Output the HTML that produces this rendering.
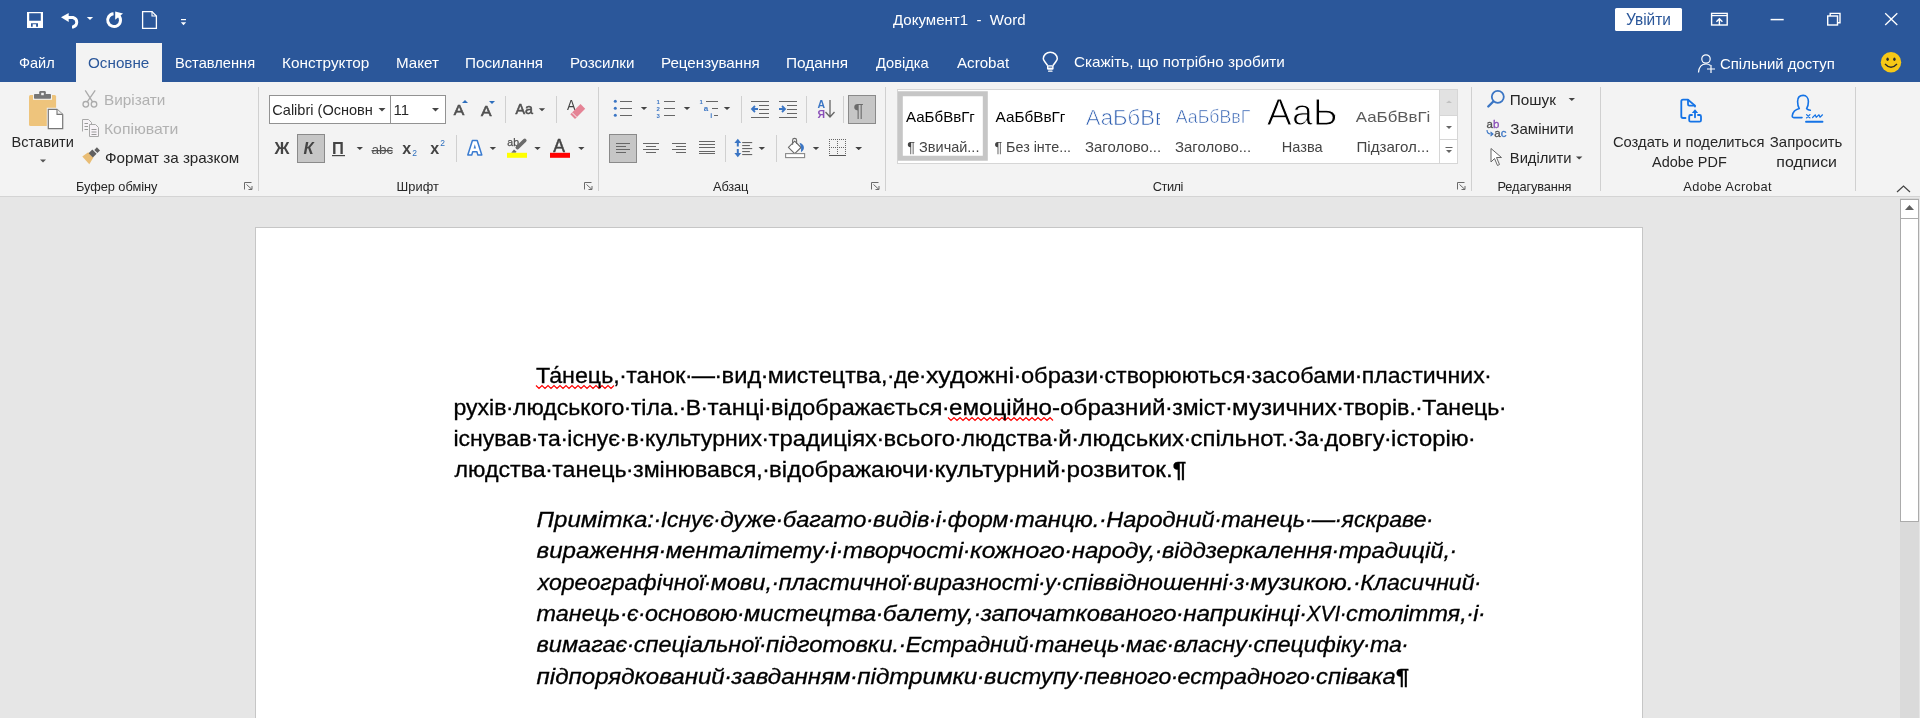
<!DOCTYPE html>
<html><head><meta charset="utf-8"><title>Word</title>
<style>
html,body{margin:0;padding:0;width:1920px;height:718px;overflow:hidden;background:#e6e6e6;}
svg{display:block;will-change:transform;font-family:"Liberation Sans",sans-serif;}
text{white-space:pre;}
</style></head><body>
<svg width="1920" height="718" viewBox="0 0 1920 718">
<!-- backgrounds -->
<rect x="0" y="0" width="1920" height="82" fill="#2b579a"/>
<rect x="76" y="43" width="86" height="40" fill="#f3f3f3"/>
<rect x="0" y="82" width="1920" height="114" fill="#f3f3f3"/>
<rect x="0" y="196" width="1920" height="1" fill="#d4d4d4"/>
<rect x="0" y="197" width="1920" height="521" fill="#e6e6e6"/>
<rect x="255.5" y="227.5" width="1387" height="500" fill="#ffffff" stroke="#c6c6c6" stroke-width="1"/>
<!-- scrollbar -->
<rect x="1900" y="198" width="19" height="520" fill="#dadada"/>
<rect x="1900.5" y="199.5" width="18" height="19" fill="#ffffff" stroke="#ababab"/>
<polygon points="1905,210 1914,210 1909.5,205" fill="#606060"/>
<rect x="1900.5" y="218.5" width="18" height="303" fill="#ffffff" stroke="#ababab"/>

<!-- QAT -->
<g fill="#ffffff">
  <path d="M27,12 H43 V28 H27 Z M29.2,13.2 V20.8 H40.8 V13.2 Z M31,23.2 V26.8 H32.7 V24.3 H36.1 V26.8 H38 V23.2 Z" fill-rule="evenodd"/>
  <polygon points="61,17.3 68.7,12.9 68.7,22.1"/>
  <path d="M67,17.5 H73 A5.5,5 0 0 1 73,27 H72" fill="none" stroke="#ffffff" stroke-width="2.9"/>
  <polygon points="86.8,17 93.1,17 90,20"/>
  <path d="M113.54,13.72 A6.4,6.4 0 1 0 118.38,15.34" fill="none" stroke="#ffffff" stroke-width="3"/>
  <polygon points="115.2,11.6 123,13.4 115.2,19.8"/>
  <path d="M142.6,11.6 H152 L156.4,16 V28.4 H142.6 Z" fill="none" stroke="#ffffff" stroke-width="1.3"/>
  <path d="M152,11.6 V16 H156.4" fill="none" stroke="#ffffff" stroke-width="1.1"/>
  <rect x="181" y="19" width="5" height="1.2"/>
  <polygon points="180.8,22.2 186.2,22.2 183.5,25.2"/>
</g>
<!-- title bar right -->
<rect x="1615" y="8" width="67" height="23" rx="1.5" fill="#ffffff"/>
<g fill="none" stroke="#ffffff" stroke-width="1.4">
  <rect x="1711.6" y="13.4" width="15.6" height="11.6"/>
  <path d="M1711.6,15.6 H1727.2" stroke-width="1.2"/>
  <path d="M1719.4,25 V18.8 M1716.4,21.8 L1719.4,18.8 L1722.4,21.8"/>
  <path d="M1770.6,19.6 H1783.7" stroke-width="1.5"/>
  <rect x="1827.7" y="16" width="9.8" height="9"/>
  <path d="M1830.2,16 V13.4 H1840 V22.7 H1837.5"/>
  <path d="M1885.2,13.2 L1897.3,25 M1897.3,13.2 L1885.2,25" stroke-width="1.3"/>
</g>
<!-- tabs row icons -->
<g fill="none" stroke="#ffffff" stroke-width="1.2">
  <path d="M1047.6,65.5 L1045,62 C1044,60.6 1043.3,59.6 1043.3,58.8 A7,6.6 0 0 1 1057.3,58.8 C1057.3,59.6 1056.6,60.6 1055.6,62 L1053,65.5" stroke-width="1.5"/>
  <circle cx="1706" cy="59" r="4.2"/>
  <path d="M1698.5,72.5 C1699,66 1702,64 1706,64 C1708,64 1709.5,64.5 1710.5,65.5"/>
  <path d="M1711,65 V73 M1707,69 H1715"/>
</g>
<path d="M1047,65.2 H1053.6 V68.6 Q1053.6,69.8 1052.4,69.8 H1048.2 Q1047,69.8 1047,68.6 Z" fill="#ffffff"/>
<rect x="1048.4" y="66.6" width="3.8" height="1" fill="#2b579a"/>
<rect x="1048" y="70.6" width="4.6" height="1.2" rx="0.6" fill="#ffffff"/>
<circle cx="1891" cy="62.3" r="10.2" fill="#f6c816"/>
<g fill="#2b2b2b">
  <ellipse cx="1887.6" cy="59.3" rx="1.2" ry="1.8"/>
  <ellipse cx="1894.4" cy="59.3" rx="1.2" ry="1.8"/>
</g>
<path d="M1885,64 Q1891,70.5 1897,64" fill="none" stroke="#2b2b2b" stroke-width="1.3"/>
<!-- ===== RIBBON ===== -->
<!-- group separators -->
<g fill="#d0d0d0">
  <rect x="258" y="87" width="1" height="104"/>
  <rect x="598" y="87" width="1" height="104"/>
  <rect x="885" y="87" width="1" height="104"/>
  <rect x="1471" y="87" width="1" height="104"/>
  <rect x="1600" y="87" width="1" height="104"/>
  <rect x="1855" y="87" width="1" height="104"/>
</g>
<!-- launchers -->
<g fill="none" stroke="#6a6a6a" stroke-width="1">
  <path d="M244.5,189.5 V182.5 H251.5"/><path d="M246.5,184.5 L252,189.5 M252,186 V189.5 H248.5"/>
  <path d="M584.5,189.5 V182.5 H591.5"/><path d="M586.5,184.5 L592,189.5 M592,186 V189.5 H588.5"/>
  <path d="M871.5,189.5 V182.5 H878.5"/><path d="M873.5,184.5 L879,189.5 M879,186 V189.5 H875.5"/>
  <path d="M1457.5,189.5 V182.5 H1464.5"/><path d="M1459.5,184.5 L1465,189.5 M1465,186 V189.5 H1461.5"/>
</g>
<!-- collapse caret -->
<path d="M1897,192 L1903.5,186 L1910,192" fill="none" stroke="#444" stroke-width="1.2"/>

<!-- Paste -->
<rect x="29" y="95" width="27.1" height="31" rx="1.5" fill="#eec47c"/>
<rect x="33" y="93" width="19" height="6.8" fill="#f3f3f3"/>
<rect x="34" y="94" width="17" height="4.8" rx="0.8" fill="#767676"/>
<rect x="39.2" y="91.1" width="6.6" height="5.2" rx="1.2" fill="#767676"/>
<rect x="41.2" y="92.8" width="2.6" height="2.4" fill="#f3f3f3"/>
<path d="M48.3,109.3 H57 L62.7,114.4 V128.6 H48.3 Z" fill="#ffffff" stroke="#f3f3f3" stroke-width="3"/>
<path d="M48.3,109.3 H57 L62.7,114.4 V128.6 H48.3 Z" fill="#ffffff" stroke="#777" stroke-width="1.2"/>
<path d="M57,109.3 V114.4 H62.7" fill="#f0f0f0" stroke="#777" stroke-width="1.1"/>
<polygon points="40,159.5 46,159.5 43,162.5" fill="#555"/>
<!-- scissors -->
<g fill="none" stroke="#ababab" stroke-width="1.3">
  <circle cx="85.8" cy="104.3" r="2.8"/><circle cx="94" cy="104.3" r="2.8"/>
  <path d="M87.2,101.8 L95.2,90.3 M92.6,101.8 L85.2,90.3"/>
</g>
<!-- copy -->
<g stroke="#a8a8a8" stroke-width="1">
  <path d="M82.5,131.5 V119.5 H88.5 L91.5,122.5 V124.5" fill="#f7f3f7"/>
  <path d="M89.5,124.5 H95.5 L98.5,127.5 V136.5 H89.5 Z" fill="#f7f3f7"/>
  <path d="M84.5,123.5 H88 M84.5,126.5 H88 M84.5,129.5 H88" stroke="#9a9a9a"/>
  <path d="M91.5,129.5 H96.5 M91.5,132 H96.5 M91.5,134.5 H96.5" stroke="#9a9a9a"/>
</g>
<!-- format painter -->
<path d="M82.3,156.5 L88.2,152.2 L93.4,157.4 L89.3,164.3 Z" fill="#e9bd75"/>
<path d="M88.6,153.2 L92.3,149.5 L96.6,153.8 L92.9,157.5 Z" fill="#606060"/>
<path d="M94.3,149.9 L96.9,147.3 L100,150.4 L97.4,153 Z" fill="#606060"/>
<!-- Font box -->
<rect x="269.5" y="95.5" width="176" height="28" fill="#ffffff" stroke="#929292"/>
<rect x="390" y="96" width="1" height="27" fill="#929292"/>
<g fill="#444">
  <polygon points="378.5,108 385.5,108 382,111.5"/>
  <polygon points="432,108 439,108 435.5,111.5"/>
</g>
<g font-family="Liberation Sans" fill="#505050" stroke="#505050" stroke-width="0.6">
  <text x="453.8" y="115" font-size="14.5" textLength="10.5" lengthAdjust="spacingAndGlyphs">A</text>
  <text x="480.9" y="116" font-size="14.5" textLength="10.5" lengthAdjust="spacingAndGlyphs">A</text>
  <text x="515.5" y="114" font-size="15" textLength="17.5" lengthAdjust="spacingAndGlyphs">Aa</text>
</g>
<g fill="#2e6fbd">
  <polygon points="462,103 468,103 465,100"/>
  <polygon points="489,101 495,101 492,104"/>
</g>
<rect x="505" y="96" width="1" height="27" fill="#d0d0d0"/>
<rect x="556" y="96" width="1" height="27" fill="#d0d0d0"/>
<polygon points="538.8,108.2 545.1,108.2 542,111.2" fill="#444"/>
<text x="567" y="110.4" font-size="14" fill="#444" font-family="Liberation Sans" textLength="8.5" lengthAdjust="spacingAndGlyphs">A</text>
<path d="M570.3,114.2 L580.5,104 L585.2,108.7 L575,118.9 Z" fill="#e58395"/>
<path d="M572,112.5 L576.7,117.2" stroke="#f3f3f3" stroke-width="1"/>
<!-- row 2 -->
<rect x="297.5" y="134.5" width="27" height="28" fill="#c6c6c6" stroke="#8a8a8a"/>
<g font-family="Liberation Sans" fill="#444" font-weight="bold">
  <text x="274.5" y="154" font-size="16.5">Ж</text>
  <text x="303.5" y="154" font-size="16.5" font-style="italic">К</text>
  <text x="332" y="154" font-size="16.5">П</text>
  <text x="402.3" y="153.7" font-size="16">x</text>
  <text x="430.3" y="153.7" font-size="16">x</text>
</g>
<rect x="332" y="155" width="13" height="1.2" fill="#444"/>
<text x="371.5" y="153.7" font-size="13.5" fill="#505050" font-family="Liberation Sans">abc</text>
<rect x="371.5" y="150" width="21" height="1.3" fill="#505050"/>
<g font-family="Liberation Sans" fill="#2e6fbd" font-size="8.5">
  <text x="412.3" y="155.7">2</text>
  <text x="440.3" y="145.7">2</text>
</g>
<polygon points="356.6,147.1 363,147.1 359.8,150.1" fill="#444"/>
<rect x="456" y="135" width="1" height="27" fill="#d0d0d0"/>
<!-- text effects A -->
<path d="M472.4,140.6 H477.2 L481.8,155.1 H477.9 L476.9,151.7 H472.7 L471.7,155.1 H467.8 Z" fill="#ffffff" stroke="#3a7bd0" stroke-width="1.5" stroke-linejoin="round"/>
<polygon points="473.6,148.6 476,148.6 474.8,144.2" fill="#3a7bd0"/>
<polygon points="489.7,147.1 496.1,147.1 492.9,150.1" fill="#444"/>
<!-- highlighter -->
<text x="507.3" y="145.6" font-size="10.5" font-family="Liberation Sans" fill="#505050" stroke="#505050" stroke-width="0.25">ab</text>
<path d="M517.3,147.6 L524.8,140.4" stroke="#6b6b6b" stroke-width="3.6" stroke-linecap="round"/>
<polygon points="511.2,152.8 514,149.4 516.6,151.8 515.6,152.8" fill="#6b6b6b"/>
<rect x="507" y="152.8" width="20" height="5" fill="#ffff00"/>
<polygon points="534.3,147.1 540.7,147.1 537.5,150.1" fill="#444"/>
<!-- font color -->
<text x="553.3" y="151.6" font-size="17.5" font-family="Liberation Sans" fill="#444" stroke="#444" stroke-width="0.5">A</text>
<rect x="550" y="152.8" width="20" height="5" fill="#ff0000"/>
<polygon points="578.1,147.1 584.5,147.1 581.3,150.1" fill="#444"/>

<!-- Paragraph row1 -->
<g fill="#3a75c4">
  <circle cx="615.3" cy="101.3" r="1.5"/><circle cx="615.3" cy="108.3" r="1.5"/><circle cx="615.3" cy="115.3" r="1.5"/>
</g>
<g fill="#666">
  <rect x="620" y="101" width="12" height="1"/><rect x="620" y="108" width="12" height="1"/><rect x="620" y="115" width="12" height="1"/>
  <rect x="664" y="101" width="11" height="1"/><rect x="664" y="108" width="11" height="1"/><rect x="664" y="115" width="11" height="1"/>
  <rect x="706" y="101" width="12" height="1"/><rect x="712" y="108" width="6" height="1"/><rect x="714" y="115" width="4" height="1"/>
</g>
<g font-family="Liberation Sans" fill="#3a75c4" font-weight="bold">
  <text x="656.5" y="103.5" font-size="6">1</text><text x="656.5" y="110.5" font-size="6">2</text><text x="656.5" y="117.5" font-size="6">3</text>
  <text x="699.5" y="104" font-size="6">1</text><text x="703.8" y="110.8" font-size="8">a</text><text x="710.3" y="117.5" font-size="7">i</text>
</g>
<g fill="#444">
  <polygon points="640.8,107 647.2,107 644,110"/>
  <polygon points="683.8,107 690.2,107 687,110"/>
  <polygon points="723.8,107 730.2,107 727,110"/>
</g>
<rect x="741" y="96" width="1" height="27" fill="#d0d0d0"/>
<rect x="806" y="96" width="1" height="27" fill="#d0d0d0"/>
<rect x="843" y="96" width="1" height="27" fill="#d0d0d0"/>
<g fill="#666">
  <rect x="751" y="101" width="18" height="1"/><rect x="759" y="105" width="10" height="1"/><rect x="759" y="109" width="10" height="1"/><rect x="759" y="113" width="10" height="1"/><rect x="751" y="117" width="18" height="1"/>
  <rect x="779" y="101" width="18" height="1"/><rect x="787" y="105" width="10" height="1"/><rect x="787" y="109" width="10" height="1"/><rect x="787" y="113" width="10" height="1"/><rect x="779" y="117" width="18" height="1"/>
</g>
<g fill="none" stroke="#3a75c4" stroke-width="1.8">
  <path d="M758,109 H752 M755,106 L752,109 L755,112"/>
  <path d="M779,109 H785 M782,106 L785,109 L782,112"/>
</g>
<text x="817.5" y="107.5" font-size="10.5" font-family="Liberation Sans" fill="#3a75c4" font-weight="bold">A</text>
<text x="817.5" y="117.5" font-size="10.5" font-family="Liberation Sans" fill="#8a4fb8" font-weight="bold">Я</text>
<path d="M830,100 V117 M825.5,112 L830,117 L834.5,112" fill="none" stroke="#666" stroke-width="1.3"/>
<rect x="848.5" y="95.5" width="27" height="28" fill="#c6c6c6" stroke="#8a8a8a"/>
<text x="853.5" y="117" font-size="19" font-family="Liberation Sans" fill="#6a6a6a">¶</text>
<!-- Paragraph row2 -->
<rect x="609.5" y="134.5" width="27" height="28" fill="#c6c6c6" stroke="#8a8a8a"/>
<g fill="#666">
  <rect x="616" y="143" width="14" height="1"/><rect x="616" y="146" width="10" height="1"/><rect x="616" y="149" width="14" height="1"/><rect x="616" y="152" width="10" height="1"/>
  <rect x="643" y="143" width="16" height="1"/><rect x="646" y="146" width="10" height="1"/><rect x="643" y="149" width="16" height="1"/><rect x="646" y="152" width="10" height="1"/>
  <rect x="672" y="143" width="14" height="1"/><rect x="676" y="146" width="10" height="1"/><rect x="672" y="149" width="14" height="1"/><rect x="676" y="152" width="10" height="1"/>
  <rect x="699" y="141" width="16" height="1"/><rect x="699" y="144" width="16" height="1"/><rect x="699" y="147" width="16" height="1"/><rect x="699" y="151" width="16" height="1"/><rect x="699" y="153" width="16" height="1"/>
  <rect x="742.2" y="142" width="10" height="1.1"/><rect x="742.2" y="145" width="7.7" height="1.1"/><rect x="742.2" y="148" width="10" height="1.1"/><rect x="742.2" y="151" width="7.7" height="1.1"/><rect x="742.2" y="154" width="10" height="1.1"/>
</g>
<rect x="725" y="135" width="1" height="27" fill="#d0d0d0"/>
<rect x="776" y="135" width="1" height="27" fill="#d0d0d0"/>
<path d="M737.8,142 V146.6 M737.8,149.1 V154" fill="none" stroke="#3a75c4" stroke-width="2"/>
<polygon points="737.8,138.8 734.4,143 741.2,143" fill="#3a75c4"/>
<polygon points="737.8,157.3 734.4,153 741.2,153" fill="#3a75c4"/>
<g fill="#444">
  <polygon points="758.6,147.1 765,147.1 761.8,150.1"/>
  <polygon points="812.8,147.1 819.2,147.1 816,150.1"/>
  <polygon points="855.5,147.1 861.9,147.1 858.7,150.1"/>
</g>
<!-- shading -->
<path d="M788.4,147.3 L794.7,141.2 L801,147.5 L794.7,153.6 Z" fill="#ffffff" stroke="#6a6a6a" stroke-width="1.1" stroke-linejoin="round"/>
<path d="M792.6,144.8 V140.2 Q792.6,138.4 794.6,138.4 Q796.6,138.4 796.6,140.2 V144" fill="none" stroke="#6a6a6a" stroke-width="1.1"/>
<path d="M799.6,142.8 Q804.8,144.5 803.8,149 Q803,151 801,152.2 Q801.8,148 799.6,142.8 Z" fill="#3a75c4"/>
<rect x="785.6" y="153.6" width="19" height="4" fill="#ffffff" stroke="#888" stroke-width="1.1"/>
<!-- borders -->
<g fill="#666"><rect x="829" y="139" width="1" height="1"/><rect x="829" y="141" width="1" height="1"/><rect x="829" y="143" width="1" height="1"/><rect x="829" y="145" width="1" height="1"/><rect x="829" y="147" width="1" height="1"/><rect x="829" y="149" width="1" height="1"/><rect x="829" y="151" width="1" height="1"/><rect x="829" y="153" width="1" height="1"/><rect x="829" y="155" width="1" height="1"/><rect x="831" y="139" width="1" height="1"/><rect x="831" y="147" width="1" height="1"/><rect x="833" y="139" width="1" height="1"/><rect x="833" y="147" width="1" height="1"/><rect x="835" y="139" width="1" height="1"/><rect x="835" y="147" width="1" height="1"/><rect x="837" y="139" width="1" height="1"/><rect x="837" y="141" width="1" height="1"/><rect x="837" y="143" width="1" height="1"/><rect x="837" y="145" width="1" height="1"/><rect x="837" y="147" width="1" height="1"/><rect x="837" y="149" width="1" height="1"/><rect x="837" y="151" width="1" height="1"/><rect x="837" y="153" width="1" height="1"/><rect x="837" y="155" width="1" height="1"/><rect x="839" y="139" width="1" height="1"/><rect x="839" y="147" width="1" height="1"/><rect x="841" y="139" width="1" height="1"/><rect x="841" y="147" width="1" height="1"/><rect x="843" y="139" width="1" height="1"/><rect x="843" y="147" width="1" height="1"/><rect x="845" y="139" width="1" height="1"/><rect x="845" y="141" width="1" height="1"/><rect x="845" y="143" width="1" height="1"/><rect x="845" y="145" width="1" height="1"/><rect x="845" y="147" width="1" height="1"/><rect x="845" y="149" width="1" height="1"/><rect x="845" y="151" width="1" height="1"/><rect x="845" y="153" width="1" height="1"/><rect x="845" y="155" width="1" height="1"/></g>
<rect x="829" y="155" width="17" height="1" fill="#555"/>
<polygon points="855.5,147.1 861.9,147.1 858.7,150.1" fill="#444"/>

<!-- Styles gallery -->
<rect x="897.5" y="89.5" width="560" height="74" fill="#ffffff" stroke="#d6d6d6"/>
<rect x="900.3" y="93.75" width="85" height="64.5" fill="none" stroke="#c6c6c6" stroke-width="5"/>
<rect x="1440" y="90" width="17" height="25" fill="#e2e2e2"/>
<rect x="1439.5" y="89.5" width="18" height="74" fill="none" stroke="#d6d6d6"/>
<path d="M1439.5,115.5 H1457.5 M1439.5,139.5 H1457.5" stroke="#d6d6d6" stroke-width="1"/>
<polygon points="1446,103 1452,103 1449,100.5" fill="#c2c2c2"/>
<polygon points="1446,126 1452,126 1449,129" fill="#666"/>
<rect x="1445.5" y="147" width="7" height="1" fill="#666"/>
<polygon points="1446,150 1452,150 1449,153" fill="#666"/>

<!-- Editing -->
<circle cx="1497.8" cy="96.8" r="6" fill="none" stroke="#3a75c4" stroke-width="1.8"/>
<path d="M1493.3,101.5 L1488.3,106.5" stroke="#3a75c4" stroke-width="2.4" stroke-linecap="round"/>
<polygon points="1568.6,98 1575,98 1571.8,101" fill="#444"/>
<text x="1486.5" y="127.8" font-size="11.5" font-family="Liberation Sans" fill="#505050" stroke="#505050" stroke-width="0.3">a<tspan fill="#8a4fb8" stroke="#8a4fb8">b</tspan></text>
<text x="1494.3" y="137" font-size="11.5" font-family="Liberation Sans" fill="#505050" stroke="#505050" stroke-width="0.3">a<tspan fill="#3a75c4" stroke="#3a75c4">c</tspan></text>
<path d="M1487,130 Q1487,134 1491,134 H1493 M1490.5,131.8 L1493,134 L1490.5,136.2" fill="none" stroke="#3a75c4" stroke-width="1.1"/>
<path d="M1491,148.5 V162 L1494.5,158.5 L1497.5,165.5 L1499.5,164.5 L1496.5,157.5 H1501.5 Z" fill="#ffffff" stroke="#666" stroke-width="1"/>
<polygon points="1576,156.5 1582.4,156.5 1579.2,159.5" fill="#444"/>

<!-- Acrobat icons -->
<g fill="none" stroke="#1473e6" stroke-width="1.8" stroke-linejoin="round" stroke-linecap="round">
  <path d="M1685.5,118 H1683 Q1681.3,118 1681.3,116.3 V101.4 Q1681.3,99.7 1683,99.7 H1688 L1695,105.6 V106.5"/>
  <path d="M1688,99.9 V104.3 Q1688,105.6 1689.3,105.6 H1694.5"/>
  <path d="M1692,115 H1690.6 Q1689.2,115 1689.2,116.4 V120.3 Q1689.2,121.7 1690.6,121.7 H1699.6 Q1701,121.7 1701,120.3 V116.4 Q1701,115 1699.6,115 H1698"/>
  <path d="M1695,117.3 V111.5"/>
  <path d="M1802,117.6 H1793.8 Q1792,117.6 1792.3,115.6 C1793,111 1796,109.5 1799.3,108.6 C1798.2,107 1797.6,104.5 1797.6,101.5 C1797.6,97.5 1800,95.4 1803.2,95.4 C1806.4,95.4 1808.4,98 1808.4,101.5 C1808.4,104.5 1807.6,107 1806.6,108.6 C1807.6,109.5 1808.6,110 1810.3,110.3" stroke-width="1.6"/>
  <path d="M1806.6,114.6 L1809.9,117.9 M1809.9,114.6 L1806.6,117.9" stroke-width="1.3"/>
  <path d="M1812.6,117.5 L1815.2,114.8 L1816.2,117.4 L1819,114.8 L1820,117.2 L1822.5,114.8" stroke-width="1.2"/>
  <path d="M1806,121.8 H1822.5" stroke-width="1.9"/>
</g>
<polygon points="1695,109.3 1691.8,113 1698.2,113" fill="#1473e6"/>
<!-- spell squiggles -->
<path d="M536,385.5 l3,3 l3,-3 l3,3 l3,-3 l3,3 l3,-3 l3,3 l3,-3 l3,3 l3,-3 l3,3 l3,-3 l3,3 l3,-3 l3,3 l3,-3 l3,3 l3,-3 l3,3 l3,-3 l3,3 l3,-3 l3,3 l3,-3 l3,3 l3,-3" fill="none" stroke="#ff0000" stroke-width="1.2"/>
<path d="M948,417.5 l3,3 l3,-3 l3,3 l3,-3 l3,3 l3,-3 l3,3 l3,-3 l3,3 l3,-3 l3,3 l3,-3 l3,3 l3,-3 l3,3 l3,-3 l3,3 l3,-3 l3,3 l3,-3 l3,3 l3,-3 l3,3 l3,-3 l3,3 l3,-3 l3,3 l3,-3 l3,3 l3,-3 l3,3 l3,-3 l3,3 l3,-3 l3,3" fill="none" stroke="#ff0000" stroke-width="1.2"/>

<text x="893.00" y="25" font-size="15" fill="#ffffff" textLength="132.54" lengthAdjust="spacingAndGlyphs">Документ1  -  Word</text>
<text x="1626.00" y="25" font-size="16" fill="#2b579a" textLength="44.90" lengthAdjust="spacingAndGlyphs">Увійти</text>
<text x="19.00" y="68" font-size="15" fill="#ffffff" textLength="35.73" lengthAdjust="spacingAndGlyphs">Файл</text>
<text x="88.00" y="68" font-size="15" fill="#2b579a" textLength="61.35" lengthAdjust="spacingAndGlyphs">Основне</text>
<text x="175.02" y="68" font-size="15" fill="#ffffff" textLength="80.10" lengthAdjust="spacingAndGlyphs">Вставлення</text>
<text x="281.98" y="68" font-size="15" fill="#ffffff" textLength="87.37" lengthAdjust="spacingAndGlyphs">Конструктор</text>
<text x="395.99" y="68" font-size="15" fill="#ffffff" textLength="42.88" lengthAdjust="spacingAndGlyphs">Макет</text>
<text x="464.98" y="68" font-size="15" fill="#ffffff" textLength="78.14" lengthAdjust="spacingAndGlyphs">Посилання</text>
<text x="569.99" y="68" font-size="15" fill="#ffffff" textLength="64.39" lengthAdjust="spacingAndGlyphs">Розсилки</text>
<text x="660.99" y="68" font-size="15" fill="#ffffff" textLength="98.73" lengthAdjust="spacingAndGlyphs">Рецензування</text>
<text x="785.97" y="68" font-size="15" fill="#ffffff" textLength="62.15" lengthAdjust="spacingAndGlyphs">Подання</text>
<text x="876.00" y="68" font-size="15" fill="#ffffff" textLength="52.76" lengthAdjust="spacingAndGlyphs">Довідка</text>
<text x="957.00" y="68" font-size="15" fill="#ffffff" textLength="52.16" lengthAdjust="spacingAndGlyphs">Acrobat</text>
<text x="1074.00" y="67" font-size="15" fill="#ffffff" textLength="210.89" lengthAdjust="spacingAndGlyphs">Скажіть, що потрібно зробити</text>
<text x="1720.00" y="69" font-size="15" fill="#ffffff" textLength="114.82" lengthAdjust="spacingAndGlyphs">Спільний доступ</text>
<text x="11.53" y="147" font-size="15" fill="#262626" textLength="62.34" lengthAdjust="spacingAndGlyphs">Вставити</text>
<text x="103.98" y="105" font-size="15" fill="#b1b1b1" textLength="61.41" lengthAdjust="spacingAndGlyphs">Вирізати</text>
<text x="103.95" y="134" font-size="15" fill="#b1b1b1" textLength="74.45" lengthAdjust="spacingAndGlyphs">Копіювати</text>
<text x="105.00" y="163" font-size="15" fill="#262626" textLength="134.32" lengthAdjust="spacingAndGlyphs">Формат за зразком</text>
<text x="76.00" y="190.5" font-size="12.8" fill="#262626" textLength="81.40" lengthAdjust="spacing">Буфер обміну</text>
<text x="396.50" y="190.5" font-size="12.8" fill="#262626" textLength="42.36" lengthAdjust="spacing">Шрифт</text>
<text x="713.00" y="190.5" font-size="12.8" fill="#262626" textLength="35.33" lengthAdjust="spacing">Абзац</text>
<text x="1152.80" y="190.5" font-size="12.8" fill="#262626" textLength="30.54" lengthAdjust="spacing">Стилі</text>
<text x="1497.50" y="190.5" font-size="12.8" fill="#262626" textLength="74.03" lengthAdjust="spacing">Редагування</text>
<text x="1683.30" y="190.5" font-size="12.8" fill="#262626" textLength="88.26" lengthAdjust="spacing">Adobe Acrobat</text>
<text x="272.30" y="114.5" font-size="15" fill="#262626" textLength="100.58" lengthAdjust="spacingAndGlyphs">Calibri (Основн</text>
<text x="393.50" y="114.5" font-size="15" fill="#262626" textLength="15.54" lengthAdjust="spacingAndGlyphs">11</text>
<text x="1509.78" y="105" font-size="15" fill="#262626" textLength="46.17" lengthAdjust="spacingAndGlyphs">Пошук</text>
<text x="1510.30" y="133.8" font-size="15" fill="#262626" textLength="63.28" lengthAdjust="spacingAndGlyphs">Замінити</text>
<text x="1509.82" y="162.6" font-size="15" fill="#262626" textLength="61.75" lengthAdjust="spacingAndGlyphs">Виділити</text>
<text x="1612.90" y="146.8" font-size="15" fill="#262626" textLength="151.52" lengthAdjust="spacingAndGlyphs">Создать и поделиться</text>
<text x="1652.00" y="166.7" font-size="15" fill="#262626" textLength="74.76" lengthAdjust="spacingAndGlyphs">Adobe PDF</text>
<text x="1769.80" y="146.8" font-size="15" fill="#262626" textLength="72.62" lengthAdjust="spacingAndGlyphs">Запросить</text>
<text x="1776.34" y="166.7" font-size="15" fill="#262626" textLength="60.66" lengthAdjust="spacingAndGlyphs">подписи</text>
<text x="906.00" y="122" font-size="15" fill="#000000" textLength="68.87" lengthAdjust="spacingAndGlyphs">АаБбВвГг</text>
<text x="907.30" y="152" font-size="15" fill="#444444" textLength="72.13" lengthAdjust="spacingAndGlyphs">¶ Звичай...</text>
<text x="995.60" y="122" font-size="15" fill="#000000" textLength="69.86" lengthAdjust="spacingAndGlyphs">АаБбВвГг</text>
<text x="994.40" y="152" font-size="15" fill="#444444" textLength="76.72" lengthAdjust="spacingAndGlyphs">¶ Без інте...</text>
<text x="1085.80" y="124.5" font-size="22" fill="#2e5eb0" stroke="#ffffff" stroke-width="0.7" textLength="80.89" lengthAdjust="spacingAndGlyphs">АаБбВв</text>
<text x="1085.00" y="152" font-size="15" fill="#444444" textLength="76.16" lengthAdjust="spacingAndGlyphs">Заголово...</text>
<text x="1175.80" y="122.5" font-size="19" fill="#2e5eb0" stroke="#ffffff" stroke-width="0.6" textLength="74.47" lengthAdjust="spacingAndGlyphs">АаБбВвГ</text>
<text x="1175.00" y="152" font-size="15" fill="#444444" textLength="76.16" lengthAdjust="spacingAndGlyphs">Заголово...</text>
<text x="1266.70" y="125" font-size="36" fill="#000000" stroke="#ffffff" stroke-width="1.0" textLength="70.79" lengthAdjust="spacingAndGlyphs">АаЬ</text>
<text x="1281.83" y="151.7" font-size="15" fill="#444444" textLength="40.83" lengthAdjust="spacingAndGlyphs">Назва</text>
<text x="1355.80" y="121.7" font-size="15" fill="#5a5a5a" textLength="74.57" lengthAdjust="spacingAndGlyphs">АаБбВвГі</text>
<text x="1356.49" y="152" font-size="15" fill="#444444" textLength="72.98" lengthAdjust="spacingAndGlyphs">Підзагол...</text>
<text x="536.00" y="382.7" font-size="22" fill="#000" stroke="#000" stroke-width="0.3" textLength="185.54" lengthAdjust="spacingAndGlyphs">Та́нець,·танок·—·</text>
<text x="721.54" y="382.7" font-size="22" fill="#000" stroke="#000" stroke-width="0.3" textLength="46.30" lengthAdjust="spacingAndGlyphs">вид·</text>
<text x="767.84" y="382.7" font-size="22" fill="#000" stroke="#000" stroke-width="0.3" textLength="126.06" lengthAdjust="spacingAndGlyphs">мистецтва,·</text>
<text x="893.90" y="382.7" font-size="22" fill="#000" stroke="#000" stroke-width="0.3" textLength="32.00" lengthAdjust="spacingAndGlyphs">де·</text>
<text x="925.90" y="382.7" font-size="22" fill="#000" stroke="#000" stroke-width="0.3" textLength="95.00" lengthAdjust="spacingAndGlyphs">художні·</text>
<text x="1020.90" y="382.7" font-size="22" fill="#000" stroke="#000" stroke-width="0.3" textLength="83.60" lengthAdjust="spacingAndGlyphs">образи·</text>
<text x="1104.50" y="382.7" font-size="22" fill="#000" stroke="#000" stroke-width="0.3" textLength="147.10" lengthAdjust="spacingAndGlyphs">створюються·</text>
<text x="1251.60" y="382.7" font-size="22" fill="#000" stroke="#000" stroke-width="0.3" textLength="110.24" lengthAdjust="spacingAndGlyphs">засобами·</text>
<text x="1361.85" y="382.7" font-size="22" fill="#000" stroke="#000" stroke-width="0.3" textLength="129.31" lengthAdjust="spacingAndGlyphs">пластичних·</text>
<text x="453.43" y="414.5" font-size="22" fill="#000" stroke="#000" stroke-width="0.3" textLength="254.07" lengthAdjust="spacingAndGlyphs">рухів·людського·тіла.·В·</text>
<text x="707.50" y="414.5" font-size="22" fill="#000" stroke="#000" stroke-width="0.3" textLength="63.63" lengthAdjust="spacingAndGlyphs">танці·</text>
<text x="771.13" y="414.5" font-size="22" fill="#000" stroke="#000" stroke-width="0.3" textLength="177.87" lengthAdjust="spacingAndGlyphs">відображається·</text>
<text x="949.00" y="414.5" font-size="22" fill="#000" stroke="#000" stroke-width="0.3" textLength="223.20" lengthAdjust="spacingAndGlyphs">емоційно-образний·</text>
<text x="1172.20" y="414.5" font-size="22" fill="#000" stroke="#000" stroke-width="0.3" textLength="59.93" lengthAdjust="spacingAndGlyphs">зміст·</text>
<text x="1232.13" y="414.5" font-size="22" fill="#000" stroke="#000" stroke-width="0.3" textLength="111.27" lengthAdjust="spacingAndGlyphs">музичних·</text>
<text x="1343.40" y="414.5" font-size="22" fill="#000" stroke="#000" stroke-width="0.3" textLength="78.90" lengthAdjust="spacingAndGlyphs">творів.·</text>
<text x="1422.30" y="414.5" font-size="22" fill="#000" stroke="#000" stroke-width="0.3" textLength="83.57" lengthAdjust="spacingAndGlyphs">Танець·</text>
<text x="453.44" y="445.6" font-size="22" fill="#000" stroke="#000" stroke-width="0.3" textLength="315.06" lengthAdjust="spacingAndGlyphs">існував·та·існує·в·культурних·</text>
<text x="768.50" y="445.6" font-size="22" fill="#000" stroke="#000" stroke-width="0.3" textLength="115.14" lengthAdjust="spacingAndGlyphs">традиціях·</text>
<text x="883.64" y="445.6" font-size="22" fill="#000" stroke="#000" stroke-width="0.3" textLength="77.86" lengthAdjust="spacingAndGlyphs">всього·</text>
<text x="961.50" y="445.6" font-size="22" fill="#000" stroke="#000" stroke-width="0.3" textLength="96.84" lengthAdjust="spacingAndGlyphs">людства·</text>
<text x="1058.34" y="445.6" font-size="22" fill="#000" stroke="#000" stroke-width="0.3" textLength="20.26" lengthAdjust="spacingAndGlyphs">й·</text>
<text x="1078.60" y="445.6" font-size="22" fill="#000" stroke="#000" stroke-width="0.3" textLength="112.00" lengthAdjust="spacingAndGlyphs">людських·</text>
<text x="1190.60" y="445.6" font-size="22" fill="#000" stroke="#000" stroke-width="0.3" textLength="103.80" lengthAdjust="spacingAndGlyphs">спільнот.·</text>
<text x="1294.40" y="445.6" font-size="22" fill="#000" stroke="#000" stroke-width="0.3" textLength="30.10" lengthAdjust="spacingAndGlyphs">За·</text>
<text x="1324.50" y="445.6" font-size="22" fill="#000" stroke="#000" stroke-width="0.3" textLength="66.64" lengthAdjust="spacingAndGlyphs">довгу·</text>
<text x="1391.12" y="445.6" font-size="22" fill="#000" stroke="#000" stroke-width="0.3" textLength="84.09" lengthAdjust="spacingAndGlyphs">історію·</text>
<text x="454.50" y="476.9" font-size="22" fill="#000" stroke="#000" stroke-width="0.3" textLength="314.62" lengthAdjust="spacingAndGlyphs">людства·танець·змінювався,·</text>
<text x="769.12" y="476.9" font-size="22" fill="#000" stroke="#000" stroke-width="0.3" textLength="165.40" lengthAdjust="spacingAndGlyphs">відображаючи·</text>
<text x="934.52" y="476.9" font-size="22" fill="#000" stroke="#000" stroke-width="0.3" textLength="132.10" lengthAdjust="spacingAndGlyphs">культурний·</text>
<text x="1066.59" y="476.9" font-size="22" fill="#000" stroke="#000" stroke-width="0.3" textLength="119.61" lengthAdjust="spacingAndGlyphs">розвиток.<tspan font-weight="bold">¶</tspan></text>
<text x="536.60" y="526.9" font-size="22" fill="#000" stroke="#000" stroke-width="0.3" textLength="124.10" lengthAdjust="spacingAndGlyphs" style="font-style:italic">Примітка:·</text>
<text x="660.70" y="526.9" font-size="22" fill="#000" stroke="#000" stroke-width="0.3" textLength="59.50" lengthAdjust="spacingAndGlyphs" style="font-style:italic">Існує·</text>
<text x="720.20" y="526.9" font-size="22" fill="#000" stroke="#000" stroke-width="0.3" textLength="62.63" lengthAdjust="spacingAndGlyphs" style="font-style:italic">дуже·</text>
<text x="782.83" y="526.9" font-size="22" fill="#000" stroke="#000" stroke-width="0.3" textLength="164.87" lengthAdjust="spacingAndGlyphs" style="font-style:italic">багато·видів·і·</text>
<text x="947.70" y="526.9" font-size="22" fill="#000" stroke="#000" stroke-width="0.3" textLength="67.00" lengthAdjust="spacingAndGlyphs" style="font-style:italic">форм·</text>
<text x="1014.70" y="526.9" font-size="22" fill="#000" stroke="#000" stroke-width="0.3" textLength="91.50" lengthAdjust="spacingAndGlyphs" style="font-style:italic">танцю.·</text>
<text x="1106.20" y="526.9" font-size="22" fill="#000" stroke="#000" stroke-width="0.3" textLength="115.10" lengthAdjust="spacingAndGlyphs" style="font-style:italic">Народний·</text>
<text x="1221.30" y="526.9" font-size="22" fill="#000" stroke="#000" stroke-width="0.3" textLength="120.27" lengthAdjust="spacingAndGlyphs" style="font-style:italic">танець·—·</text>
<text x="1341.55" y="526.9" font-size="22" fill="#000" stroke="#000" stroke-width="0.3" textLength="91.42" lengthAdjust="spacingAndGlyphs" style="font-style:italic">яскраве·</text>
<text x="536.60" y="558.2" font-size="22" fill="#000" stroke="#000" stroke-width="0.3" textLength="129.10" lengthAdjust="spacingAndGlyphs" style="font-style:italic">вираження·</text>
<text x="665.70" y="558.2" font-size="22" fill="#000" stroke="#000" stroke-width="0.3" textLength="164.80" lengthAdjust="spacingAndGlyphs" style="font-style:italic">менталітету·</text>
<text x="830.50" y="558.2" font-size="22" fill="#000" stroke="#000" stroke-width="0.3" textLength="12.50" lengthAdjust="spacingAndGlyphs" style="font-style:italic">і·</text>
<text x="843.00" y="558.2" font-size="22" fill="#000" stroke="#000" stroke-width="0.3" textLength="127.00" lengthAdjust="spacingAndGlyphs" style="font-style:italic">творчості·</text>
<text x="970.00" y="558.2" font-size="22" fill="#000" stroke="#000" stroke-width="0.3" textLength="101.70" lengthAdjust="spacingAndGlyphs" style="font-style:italic">кожного·</text>
<text x="1071.70" y="558.2" font-size="22" fill="#000" stroke="#000" stroke-width="0.3" textLength="90.30" lengthAdjust="spacingAndGlyphs" style="font-style:italic">народу,·</text>
<text x="1162.00" y="558.2" font-size="22" fill="#000" stroke="#000" stroke-width="0.3" textLength="176.70" lengthAdjust="spacingAndGlyphs" style="font-style:italic">віддзеркалення·</text>
<text x="1338.70" y="558.2" font-size="22" fill="#000" stroke="#000" stroke-width="0.3" textLength="118.01" lengthAdjust="spacingAndGlyphs" style="font-style:italic">традицій,·</text>
<text x="537.67" y="589.6" font-size="22" fill="#000" stroke="#000" stroke-width="0.3" textLength="173.13" lengthAdjust="spacingAndGlyphs" style="font-style:italic">хореографічної·</text>
<text x="710.80" y="589.6" font-size="22" fill="#000" stroke="#000" stroke-width="0.3" textLength="67.70" lengthAdjust="spacingAndGlyphs" style="font-style:italic">мови,·</text>
<text x="778.50" y="589.6" font-size="22" fill="#000" stroke="#000" stroke-width="0.3" textLength="134.70" lengthAdjust="spacingAndGlyphs" style="font-style:italic">пластичної·</text>
<text x="913.20" y="589.6" font-size="22" fill="#000" stroke="#000" stroke-width="0.3" textLength="131.84" lengthAdjust="spacingAndGlyphs" style="font-style:italic">виразності·</text>
<text x="1045.04" y="589.6" font-size="22" fill="#000" stroke="#000" stroke-width="0.3" textLength="17.26" lengthAdjust="spacingAndGlyphs" style="font-style:italic">у·</text>
<text x="1062.30" y="589.6" font-size="22" fill="#000" stroke="#000" stroke-width="0.3" textLength="172.17" lengthAdjust="spacingAndGlyphs" style="font-style:italic">співвідношенні·</text>
<text x="1234.47" y="589.6" font-size="22" fill="#000" stroke="#000" stroke-width="0.3" textLength="15.83" lengthAdjust="spacingAndGlyphs" style="font-style:italic">з·</text>
<text x="1250.30" y="589.6" font-size="22" fill="#000" stroke="#000" stroke-width="0.3" textLength="110.00" lengthAdjust="spacingAndGlyphs" style="font-style:italic">музикою.·</text>
<text x="1360.30" y="589.6" font-size="22" fill="#000" stroke="#000" stroke-width="0.3" textLength="120.67" lengthAdjust="spacingAndGlyphs" style="font-style:italic">Класичний·</text>
<text x="536.60" y="620.9" font-size="22" fill="#000" stroke="#000" stroke-width="0.3" textLength="90.30" lengthAdjust="spacingAndGlyphs" style="font-style:italic">танець·</text>
<text x="626.90" y="620.9" font-size="22" fill="#000" stroke="#000" stroke-width="0.3" textLength="18.00" lengthAdjust="spacingAndGlyphs" style="font-style:italic">є·</text>
<text x="644.90" y="620.9" font-size="22" fill="#000" stroke="#000" stroke-width="0.3" textLength="99.20" lengthAdjust="spacingAndGlyphs" style="font-style:italic">основою·</text>
<text x="744.10" y="620.9" font-size="22" fill="#000" stroke="#000" stroke-width="0.3" textLength="138.62" lengthAdjust="spacingAndGlyphs" style="font-style:italic">мистецтва·</text>
<text x="882.72" y="620.9" font-size="22" fill="#000" stroke="#000" stroke-width="0.3" textLength="97.95" lengthAdjust="spacingAndGlyphs" style="font-style:italic">балету,·</text>
<text x="980.68" y="620.9" font-size="22" fill="#000" stroke="#000" stroke-width="0.3" textLength="202.52" lengthAdjust="spacingAndGlyphs" style="font-style:italic">започаткованого·</text>
<text x="1183.20" y="620.9" font-size="22" fill="#000" stroke="#000" stroke-width="0.3" textLength="123.28" lengthAdjust="spacingAndGlyphs" style="font-style:italic">наприкінці·</text>
<text x="1306.48" y="620.9" font-size="22" fill="#000" stroke="#000" stroke-width="0.3" textLength="39.62" lengthAdjust="spacingAndGlyphs" style="font-style:italic">XVI·</text>
<text x="1346.10" y="620.9" font-size="22" fill="#000" stroke="#000" stroke-width="0.3" textLength="139.09" lengthAdjust="spacingAndGlyphs" style="font-style:italic">століття,·і·</text>
<text x="536.60" y="652.3" font-size="22" fill="#000" stroke="#000" stroke-width="0.3" textLength="97.20" lengthAdjust="spacingAndGlyphs" style="font-style:italic">вимагає·</text>
<text x="633.80" y="652.3" font-size="22" fill="#000" stroke="#000" stroke-width="0.3" textLength="132.20" lengthAdjust="spacingAndGlyphs" style="font-style:italic">спеціальної·</text>
<text x="766.00" y="652.3" font-size="22" fill="#000" stroke="#000" stroke-width="0.3" textLength="139.70" lengthAdjust="spacingAndGlyphs" style="font-style:italic">підготовки.·</text>
<text x="905.70" y="652.3" font-size="22" fill="#000" stroke="#000" stroke-width="0.3" textLength="129.10" lengthAdjust="spacingAndGlyphs" style="font-style:italic">Естрадний·</text>
<text x="1034.80" y="652.3" font-size="22" fill="#000" stroke="#000" stroke-width="0.3" textLength="138.80" lengthAdjust="spacingAndGlyphs" style="font-style:italic">танець·має·</text>
<text x="1173.60" y="652.3" font-size="22" fill="#000" stroke="#000" stroke-width="0.3" textLength="79.80" lengthAdjust="spacingAndGlyphs" style="font-style:italic">власну·</text>
<text x="1253.40" y="652.3" font-size="22" fill="#000" stroke="#000" stroke-width="0.3" textLength="154.77" lengthAdjust="spacingAndGlyphs" style="font-style:italic">специфіку·та·</text>
<text x="536.60" y="683.5" font-size="22" fill="#000" stroke="#000" stroke-width="0.3" textLength="194.78" lengthAdjust="spacingAndGlyphs" style="font-style:italic">підпорядкований·</text>
<text x="731.38" y="683.5" font-size="22" fill="#000" stroke="#000" stroke-width="0.3" textLength="252.62" lengthAdjust="spacingAndGlyphs" style="font-style:italic">завданням·підтримки·</text>
<text x="984.00" y="683.5" font-size="22" fill="#000" stroke="#000" stroke-width="0.3" textLength="100.30" lengthAdjust="spacingAndGlyphs" style="font-style:italic">виступу·</text>
<text x="1084.30" y="683.5" font-size="22" fill="#000" stroke="#000" stroke-width="0.3" textLength="93.30" lengthAdjust="spacingAndGlyphs" style="font-style:italic">певного·</text>
<text x="1177.60" y="683.5" font-size="22" fill="#000" stroke="#000" stroke-width="0.3" textLength="138.50" lengthAdjust="spacingAndGlyphs" style="font-style:italic">естрадного·</text>
<text x="1316.10" y="683.5" font-size="22" fill="#000" stroke="#000" stroke-width="0.3" textLength="92.70" lengthAdjust="spacingAndGlyphs" style="font-style:italic">співака<tspan font-weight="bold">¶</tspan></text>
<rect x="1160" y="100" width="13" height="30" fill="#ffffff"/>
</svg>
</body></html>
